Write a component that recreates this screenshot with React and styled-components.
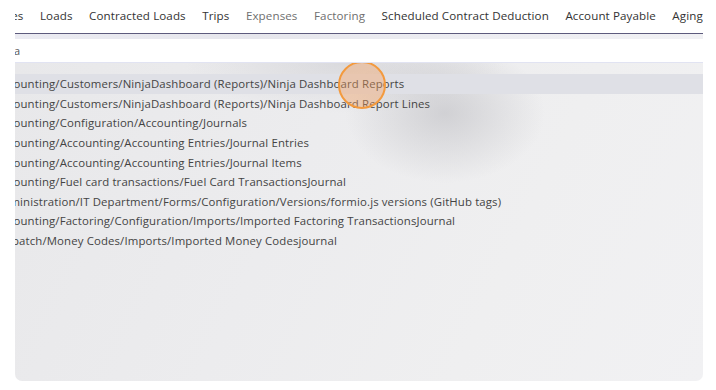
import React from "react";
import styled, { createGlobalStyle } from "styled-components";

const Global = createGlobalStyle`
  html, body { margin: 0; padding: 0; background: #ffffff; }
  body { font-family: "Open Sans", "Noto Sans", sans-serif; }
`;

const Page = styled.div`
  width: 716px;
  height: 390px;
  padding: 0 13px 0 15px;
  box-sizing: border-box;
  display: flex;
  flex-direction: column;
`;

const Frame = styled.div`
  flex: 1;
  display: flex;
  flex-direction: column;
  overflow: hidden;
  padding-bottom: 9px;
`;

const NavWrap = styled.div`
  overflow: hidden;
  border-bottom: 1.5px solid #5d5b7d;
`;

const Nav = styled.nav`
  display: flex;
  align-items: center;
  gap: 16.5px;
  height: 30px;
  padding-bottom: 3px;
  margin-left: -36px;
  white-space: nowrap;
`;

const NavItem = styled.span`
  font-size: 11.6px;
  color: ${(p) => (p.$muted ? "#6f6f6f" : "#333333")};
  letter-spacing: 0.1px;
`;

const ShadowBand = styled.div`
  height: 5px;
  background: linear-gradient(90deg, #ebebf2 0%, #e6e6ec 35%, #ececf1 60%, #f1f1f4 100%);
`;

const SearchRow = styled.div`
  height: 23px;
  display: flex;
  align-items: center;
  font-size: 11px;
  color: #555;
  background: #ffffff;
  margin-left: -1px;
`;

const Panel = styled.div`
  position: relative;
  flex: 1;
  border-top: 1.5px solid #e1e3f2;
  border-radius: 0 0 7px 7px;
  background:
    radial-gradient(ellipse 100px 70px at 430px 50px, rgba(185,185,190,0.55), rgba(185,185,190,0) 100%),
    radial-gradient(ellipse 160px 50px at 330px 0px, rgba(200,200,205,0.5), rgba(200,200,205,0) 100%),
    linear-gradient(115deg, #e8e8ea 0%, #ececee 40%, #efeff0 70%, #f1f1f3 100%);
  padding-top: 11px;
  overflow: hidden;
`;

const List = styled.ul`
  list-style: none;
  margin: 0;
  padding: 0;
`;

const Row = styled.li`
  height: 19.6px;
  display: flex;
  align-items: center;
  font-size: 11.4px;
  color: #444444;
  white-space: nowrap;
  background: ${(p) => (p.$active ? "#dfe0e6" : "transparent")};
`;

const RowText = styled.span`
  margin-left: -20px;
  letter-spacing: 0.13px;
`;

const Cursor = styled.div`
  position: absolute;
  left: 323px;
  top: -2px;
  width: 44px;
  height: 44px;
  border-radius: 50%;
  border: 2px solid #f39a3e;
  background: rgba(244, 160, 95, 0.4);
  pointer-events: none;
`;

const navItems = [
  ["Invoices", false],
  ["Loads", false],
  ["Contracted Loads", false],
  ["Trips", false],
  ["Expenses", true],
  ["Factoring", true],
  ["Scheduled Contract Deduction", false],
  ["Account Payable", false],
  ["Aging", false],
];

const rows = [
  "Accounting/Customers/NinjaDashboard (Reports)/Ninja Dashboard Reports",
  "Accounting/Customers/NinjaDashboard (Reports)/Ninja Dashboard Report Lines",
  "Accounting/Configuration/Accounting/Journals",
  "Accounting/Accounting/Accounting Entries/Journal Entries",
  "Accounting/Accounting/Accounting Entries/Journal Items",
  "Accounting/Fuel card transactions/Fuel Card TransactionsJournal",
  "Administration/IT Department/Forms/Configuration/Versions/formio.js versions (GitHub tags)",
  "Accounting/Factoring/Configuration/Imports/Imported Factoring TransactionsJournal",
  "Dispatch/Money Codes/Imports/Imported Money Codesjournal",
];

export default function App() {
  return (
    <>
      <Global />
      <Page>
        <Frame>
          <NavWrap>
            <Nav>
              {navItems.map(([t, m]) => (
                <NavItem key={t} $muted={m}>
                  {t}
                </NavItem>
              ))}
            </Nav>
          </NavWrap>
          <ShadowBand />
          <SearchRow>a</SearchRow>
          <Panel>
            <List>
              {rows.map((r, i) => (
                <Row key={r} $active={i === 0}>
                  <RowText>{r}</RowText>
                </Row>
              ))}
            </List>
            <Cursor />
          </Panel>
        </Frame>
      </Page>
    </>
  );
}
